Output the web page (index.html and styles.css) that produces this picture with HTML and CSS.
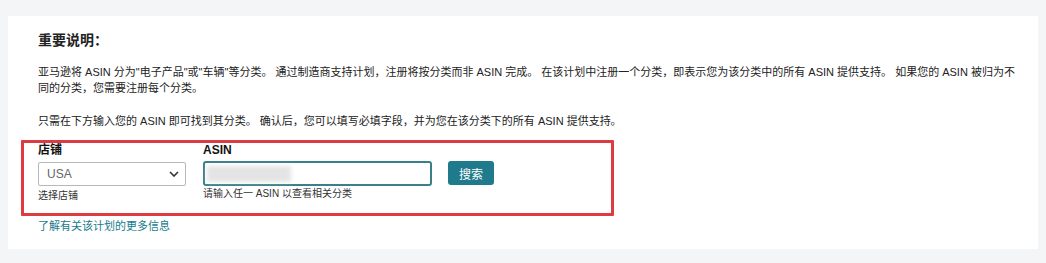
FILE: index.html
```html
<!DOCTYPE html>
<html lang="zh-CN">
<head>
  <meta charset="UTF-8">
  <title>制造商支持计划</title>
  <link rel="stylesheet" href="styles.css">
</head>
<body>
  <div class="card">
    <h2 class="title">重要说明：</h2>
    <p class="note">亚马逊将 ASIN 分为"电子产品"或"车辆"等分类。 通过制造商支持计划，注册将按分类而非 ASIN 完成。 在该计划中注册一个分类，即表示您为该分类中的所有 ASIN 提供支持。 如果您的 ASIN 被归为不同的分类，您需要注册每个分类。</p>
    <p class="note second">只需在下方输入您的 ASIN 即可找到其分类。 确认后，您可以填写必填字段，并为您在该分类下的所有 ASIN 提供支持。</p>

    <div class="search-box">
      <div class="field store">
        <label class="field-label">店铺</label>
        <div class="select">
          <span>USA</span>
          <svg width="10" height="6" viewBox="0 0 10 6"><path d="M1 1 L5 5 L9 1" fill="none" stroke="#333" stroke-width="1.6"/></svg>
        </div>
        <div class="hint store-hint">选择店铺</div>
      </div>
      <div class="field asin">
        <label class="field-label">ASIN</label>
        <div class="input"><span class="blurred"></span></div>
        <div class="hint">请输入任一 ASIN 以查看相关分类</div>
      </div>
      <button class="search-btn">搜索</button>
    </div>

    <a class="more-link" href="#">了解有关该计划的更多信息</a>
  </div>
</body>
</html>
```

FILE: styles.css
```css
body {
  margin: 0;
  padding: 16px 8px 15px;
  background-color: #f3f5f7;
  font-family: "Liberation Sans", "Noto Sans CJK SC", sans-serif;
  color: #1a1a1a;
}

.card {
  background: #fff;
  padding: 14px 14px 16px 30px;
}

.title {
  margin: 0 0 14px;
  font-size: 14px;
  line-height: 20px;
  font-weight: bold;
  color: #222;
}

.note {
  margin: 0;
  font-size: 11px;
  line-height: 16px;
  color: #222;
}

.note.second {
  margin-top: 17px;
}

.search-box {
  display: flex;
  align-items: flex-start;
  width: 559px;
  margin: 11px 0 0 -17px;
  padding: 0 14px 10px;
  border: 3px solid #dd3b42;
  border-radius: 1px;
}

.field {
  display: flex;
  flex-direction: column;
}

.field-label {
  font-size: 12px;
  line-height: 14px;
  font-weight: bold;
  color: #111;
}

.store {
  width: 148px;
  margin-right: 17px;
}

.select {
  display: flex;
  align-items: center;
  justify-content: space-between;
  height: 22px;
  margin-top: 5px;
  padding: 0 6px 0 8px;
  border: 1px solid #b8b8b8;
  border-radius: 2px;
  font-size: 12px;
  color: #666;
}

.hint {
  font-size: 10px;
  line-height: 14px;
  color: #333;
  margin-top: 1px;
}

.store-hint {
  margin-top: 3px;
}

.asin {
  width: 229px;
}

.input {
  height: 21px;
  margin-top: 4px;
  border: 2px solid #3a8088;
  border-radius: 3px;
  padding: 0 2px;
  display: flex;
  align-items: center;
}

.blurred {
  display: block;
  width: 84px;
  height: 16px;
  background: #e4e4e4;
  filter: blur(2px);
}

.search-btn {
  margin: 18px 0 0 16px;
  width: 46px;
  height: 24px;
  border: none;
  border-radius: 3px;
  background-color: #1f7a8b;
  color: #fff;
  font-family: inherit;
  font-size: 12px;
  padding: 0;
}

.more-link {
  display: block;
  margin-top: 3px;
  font-size: 11px;
  line-height: 14px;
  color: #167b8b;
  text-decoration: none;
}
```
